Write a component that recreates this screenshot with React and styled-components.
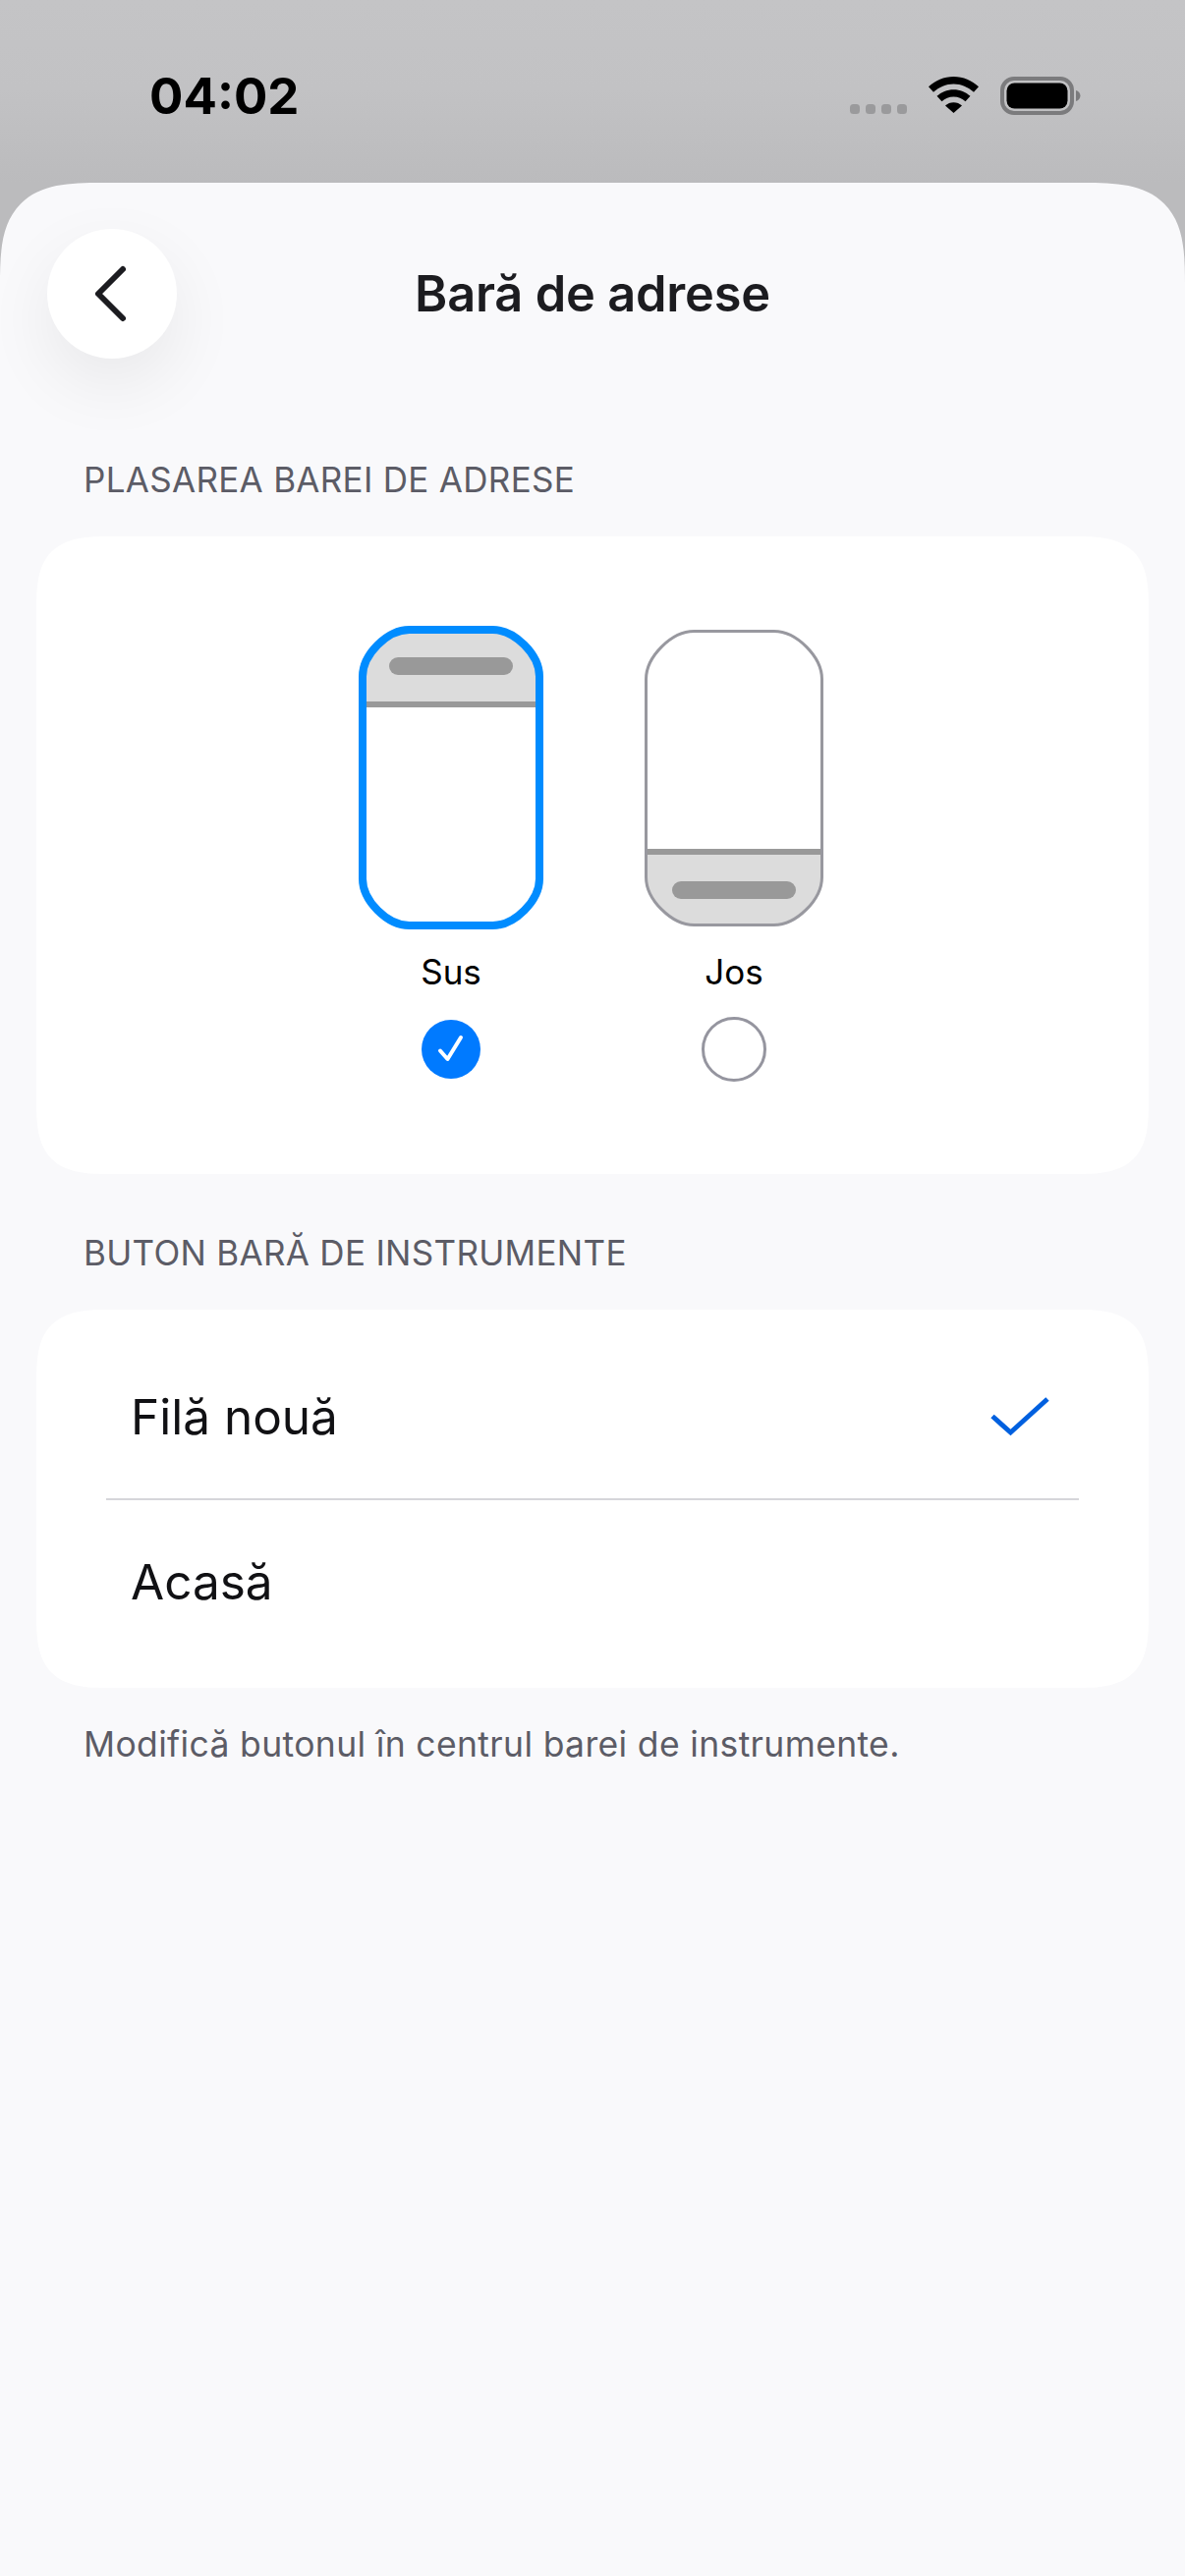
import React from "react";
import styled, { createGlobalStyle } from "styled-components";

const Global = createGlobalStyle`
  html, body { margin: 0; padding: 0; }
  body { background: #f9f9fb; font-family: Inter, "Noto Sans", "Liberation Sans", sans-serif; }
`;

const Screen = styled.div`
  width: 1206px;
  height: 2622px;
  overflow: hidden;
  background: linear-gradient(180deg, #c4c4c6 0, #c2c2c4 90px, #bbbbbd 186px, #bbbbbd 400px);
  display: flex;
  flex-direction: column;
`;

const StatusBar = styled.div`
  height: 186px;
  flex: none;
  box-sizing: border-box;
  padding: 70px 106px 0 152px;
  display: flex;
  justify-content: space-between;
  align-items: flex-start;
`;

const Time = styled.div`
  font-size: 51px;
  line-height: 56px;
  font-weight: 700;
  color: #000;
  letter-spacing: 0;
`;

const StatusIcons = styled.div`
  display: flex;
  align-items: flex-start;
  padding-top: 8px;
`;

const Signal = styled.div`
  display: flex;
  gap: 6px;
  margin-top: 28px;
  margin-right: 22px;
`;

const SignalDot = styled.span`
  width: 10px;
  height: 10px;
  border-radius: 3.5px;
  background: #9a9a9c;
`;

const Sheet = styled.main`
  flex: 1;
  background: #f9f9fb;
  border-radius: 104px 104px 0 0;
  corner-shape: superellipse(1.6);
  overflow: visible;
  display: flex;
  flex-direction: column;
`;

const Header = styled.header`
  display: grid;
  grid-template-columns: 132px 1fr 132px;
  align-items: center;
  padding: 47px 48px 0;
`;

const BackButton = styled.button`
  width: 132px;
  height: 132px;
  padding: 0;
  border: 0;
  border-radius: 50%;
  background: #fff;
  box-shadow: 0 26px 70px rgba(0, 0, 0, 0.07);
  display: flex;
  align-items: center;
  justify-content: center;
`;

const Title = styled.h1`
  margin: 0;
  text-align: center;
  font-size: 50.5px;
  line-height: 62px;
  font-weight: 600;
  color: #1c1c20;
  letter-spacing: -0.2px;
`;

const SectionLabel = styled.div`
  margin: ${(p) => p.$top}px 0 0 85px;
  font-size: 35px;
  line-height: 44px;
  color: #5c5c66;
  letter-spacing: 0.3px;
`;

const Card = styled.section`
  margin: 36px 37px 0;
  background: #fff;
  border-radius: 76px;
  corner-shape: superellipse(1.6);
`;

const PlacementCard = styled(Card)`
  height: 649px;
  box-sizing: border-box;
  padding-top: 91px;
  display: flex;
  justify-content: center;
  gap: 48px;
`;

const Option = styled.div`
  width: 240px;
  display: flex;
  flex-direction: column;
  align-items: center;
`;

const OptionLabel = styled.div`
  margin-top: 21px;
  font-size: 35px;
  line-height: 44px;
  color: #000;
`;

const RadioSlot = styled.div`
  margin-top: 24px;
  width: 66px;
  height: 66px;
  display: flex;
  align-items: center;
  justify-content: center;
`;

const RadioChecked = styled.div`
  width: 60px;
  height: 60px;
  border-radius: 50%;
  background: #007aff;
  display: flex;
  align-items: center;
  justify-content: center;
`;

const RadioEmpty = styled.div`
  width: 66px;
  height: 66px;
  box-sizing: border-box;
  border-radius: 50%;
  border: 3.5px solid #95959f;
`;

const ListCard = styled(Card)`
  padding: 25px 0 24px;
`;

const Row = styled.div`
  height: 168px;
  box-sizing: border-box;
  padding: 0 101px 0 96px;
  display: flex;
  align-items: center;
  justify-content: space-between;
  font-size: 49.5px;
  color: #111114;
`;

const Divider = styled.div`
  height: 2px;
  margin: 0 71px;
  margin-bottom: -2px;
  position: relative;
  top: -1px;
  background: #d6d6da;
`;

const Footnote = styled.p`
  margin: 36px 0 0 85px;
  font-size: 35.5px;
  line-height: 44px;
  color: #5c5c66;
  letter-spacing: 0.35px;
`;

const corner = (x, y, w, h, r) => {
  const k = r * 1.32;
  const c = r * 0.62;
  return `M${x + k} ${y}H${x + w - k}C${x + w - k + c} ${y} ${x + w} ${y + k - c} ${x + w} ${y + k}V${y + h - k}C${x + w} ${y + h - k + c} ${x + w - k + c} ${y + h} ${x + w - k} ${y + h}H${x + k}C${x + k - c} ${y + h} ${x} ${y + h - k + c} ${x} ${y + h - k}V${y + k}C${x} ${y + k - c} ${x + k - c} ${y} ${x + k} ${y}Z`;
};

const PhoneTop = () => {
  const d = corner(4, 4, 180, 301, 36);
  return (
    <svg width="188" height="309" viewBox="0 0 188 309">
      <clipPath id="top-clip"><path d={d} /></clipPath>
      <g clipPath="url(#top-clip)">
        <rect x="0" y="0" width="188" height="77" fill="#dcdcdc" />
        <rect x="0" y="77" width="188" height="6" fill="#999" />
      </g>
      <rect x="31" y="32" width="126" height="18" rx="9" fill="#999" />
      <path d={d} fill="none" stroke="#008cff" strokeWidth="8" />
    </svg>
  );
};

const PhoneBottom = () => {
  const d = corner(4.5, 5.5, 179, 299, 37);
  return (
    <svg width="188" height="309" viewBox="0 0 188 309">
      <clipPath id="bottom-clip"><path d={d} /></clipPath>
      <g clipPath="url(#bottom-clip)">
        <rect x="0" y="233" width="188" height="76" fill="#dcdcdc" />
        <rect x="0" y="227" width="188" height="6" fill="#999" />
      </g>
      <rect x="31" y="260" width="126" height="18" rx="9" fill="#999" />
      <path d={d} fill="none" stroke="#98989f" strokeWidth="3" />
    </svg>
  );
};

const Wifi = () => (
  <svg width="51" height="37" viewBox="0 0 51 37" style={{ marginRight: 22 }}>
    <path d="M25.5 0C15.6 0 7 3.9 0 10.2l5 5.5C10.8 10.6 17.8 7.4 25.5 7.4s14.7 3.2 20.5 8.3l5-5.5C44 3.9 35.4 0 25.5 0Z" fill="#000" />
    <path d="M25.5 13.2c-6.6 0-12.4 2.5-17 6.6l5 5.5c3.3-2.9 7.4-4.8 12-4.8s8.7 1.9 12 4.8l5-5.5c-4.6-4.1-10.4-6.6-17-6.6Z" fill="#000" />
    <path d="M25.5 26.2c-3.2 0-6.2 1.2-8.5 3.3L25.5 37l8.5-7.5c-2.3-2.1-5.3-3.3-8.5-3.3Z" fill="#000" />
  </svg>
);

const Battery = () => (
  <svg width="82" height="39" viewBox="0 0 82 39">
    <rect x="2" y="2" width="71" height="35" rx="12" fill="none" stroke="#7b7b7d" strokeWidth="4" />
    <rect x="6.5" y="6.5" width="62" height="26" rx="8" fill="#000" />
    <path d="M77 14c2.6.8 4.5 3 4.5 5.500S79.600 24.200 77 25Z" fill="#7b7b7d" />
  </svg>
);

export default function App() {
  return (
    <Screen>
      <Global />
      <StatusBar>
        <Time>04:02</Time>
        <StatusIcons>
          <Signal>
            <SignalDot />
            <SignalDot />
            <SignalDot />
            <SignalDot />
          </Signal>
          <Wifi />
          <Battery />
        </StatusIcons>
      </StatusBar>
      <Sheet>
        <Header>
          <BackButton aria-label="Înapoi">
            <svg width="44" height="60" viewBox="0 0 44 60">
              <path d="M33 5 8 30l25 25" fill="none" stroke="#1c1c20" strokeWidth="6" strokeLinecap="round" strokeLinejoin="round" />
            </svg>
          </BackButton>
          <Title>Bară de adrese</Title>
          <span />
        </Header>
        <SectionLabel $top={101}>PLASAREA BAREI DE ADRESE</SectionLabel>
        <PlacementCard>
          <Option>
            <PhoneTop />
            <OptionLabel>Sus</OptionLabel>
            <RadioSlot>
              <RadioChecked>
                <svg width="30" height="30" viewBox="0 0 30 30">
                  <path d="M4 16.500 11.500 25 25 3" fill="none" stroke="#fff" strokeWidth="4" strokeLinecap="round" strokeLinejoin="round" />
                </svg>
              </RadioChecked>
            </RadioSlot>
          </Option>
          <Option>
            <PhoneBottom />
            <OptionLabel>Jos</OptionLabel>
            <RadioSlot>
              <RadioEmpty />
            </RadioSlot>
          </Option>
        </PlacementCard>
        <SectionLabel $top={58}>BUTON BARĂ DE INSTRUMENTE</SectionLabel>
        <ListCard>
          <Row>
            Filă nouă
            <svg width="60" height="40" viewBox="0 0 60 40">
              <path d="M2 19.500 20.500 36 58 2" fill="none" stroke="#0060df" strokeWidth="5" />
            </svg>
          </Row>
          <Divider />
          <Row>Acasă</Row>
        </ListCard>
        <Footnote>Modifică butonul în centrul barei de instrumente.</Footnote>
      </Sheet>
    </Screen>
  );
}
